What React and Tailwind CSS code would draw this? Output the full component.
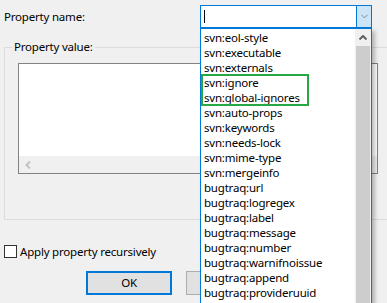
import { ChevronDown } from 'lucide-react';

const props = [
  'svn:eol-style',
  'svn:executable',
  'svn:externals',
  'svn:ignore',
  'svn:global-ignores',
  'svn:auto-props',
  'svn:keywords',
  'svn:needs-lock',
  'svn:mime-type',
  'svn:mergeinfo',
  'bugtraq:url',
  'bugtraq:logregex',
  'bugtraq:label',
  'bugtraq:message',
  'bugtraq:number',
  'bugtraq:warnifnoissue',
  'bugtraq:append',
  'bugtraq:provideruuid',
];

const App = () => {
  return (
    <div className="w-[387px] h-[303px] bg-[#f0f0f0] relative overflow-hidden text-[11.5px] tracking-[-0.2px] text-black font-['Noto_Sans',sans-serif] leading-none">
      {/* Property name row */}
      <div className="flex items-center pt-[5px]">
        <span className="w-[200px] pl-[4px]">Property name:</span>
        <div className="flex w-[172px] h-[23px] border border-[#0078d7] bg-white">
          <div className="flex-1 flex items-center pl-[3px]">
            <div className="w-px h-[13px] bg-black"></div>
          </div>
          <div className="w-[16px] -my-px -mr-px border border-[#0078d7] bg-[#cce4f7] flex items-center justify-center">
            <ChevronDown className="w-[11px] h-[11px] text-[#606060]" strokeWidth={1.5} />
          </div>
        </div>
      </div>

      {/* Property value group */}
      <div className="relative mt-[19px] ml-[4px] w-[420px] h-[173px] border border-[#dcdcdc]">
        <span className="absolute -top-[7px] left-[7px] px-[2px] bg-[#f0f0f0]">Property value:</span>
        <div className="mt-[15px] ml-[13px] w-[360px] h-[111px] border border-[#828282] bg-white flex flex-col">
          <div className="flex-1"></div>
          <div className="h-[17px] bg-[#f0f0f0] flex items-center pl-[6px]">
            <svg width="6" height="8" viewBox="0 0 6 8">
              <path d="M5 0.5 L1.5 4 L5 7.5" fill="none" stroke="#c2c2c2" strokeWidth="2" />
            </svg>
          </div>
        </div>
      </div>

      {/* Recursive checkbox */}
      <label className="flex items-center gap-[3px] mt-[25px] ml-[4px]">
        <span className="w-[13px] h-[13px] border border-[#333] bg-white"></span>
        <span>Apply property recursively</span>
      </label>

      {/* Buttons */}
      <div className="flex gap-[14px] mt-[13px] ml-[86px]">
        <button className="w-[86px] h-[24px] border-2 border-[#0078d7] bg-[#e1e1e1] flex items-center justify-center">OK</button>
        <div className="w-[86px] h-[24px] border border-[#adadad] bg-[#e1e1e1]"></div>
      </div>

      {/* Dropdown list */}
      <div className="absolute left-[200px] top-[28px] w-[172px] h-[290px] border border-[#0078d7] bg-white flex shadow-[3px_3px_4px_rgba(0,0,0,0.25)]">
        <ul className="flex-1 pt-[1px] pl-[3px]">
          {props.map((p) => (
            <li key={p} className="h-[15px] flex items-center whitespace-nowrap">{p}</li>
          ))}
        </ul>
        <div className="w-[16px] bg-[#f0f0f0] flex flex-col">
          <div className="h-[17px] flex items-center justify-center">
            <svg width="8" height="5" viewBox="0 0 8 5">
              <path d="M0.5 4.5 L4 1 L7.5 4.5" fill="none" stroke="#606060" strokeWidth="2" />
            </svg>
          </div>
          <div className="flex-1 bg-[#cdcdcd] mx-px"></div>
        </div>
      </div>

      {/* Highlight */}
      <div className="absolute left-[201px] top-[74px] w-[108px] h-[32px] border-2 border-[#27a844]"></div>
    </div>
  );
};

export default App;
